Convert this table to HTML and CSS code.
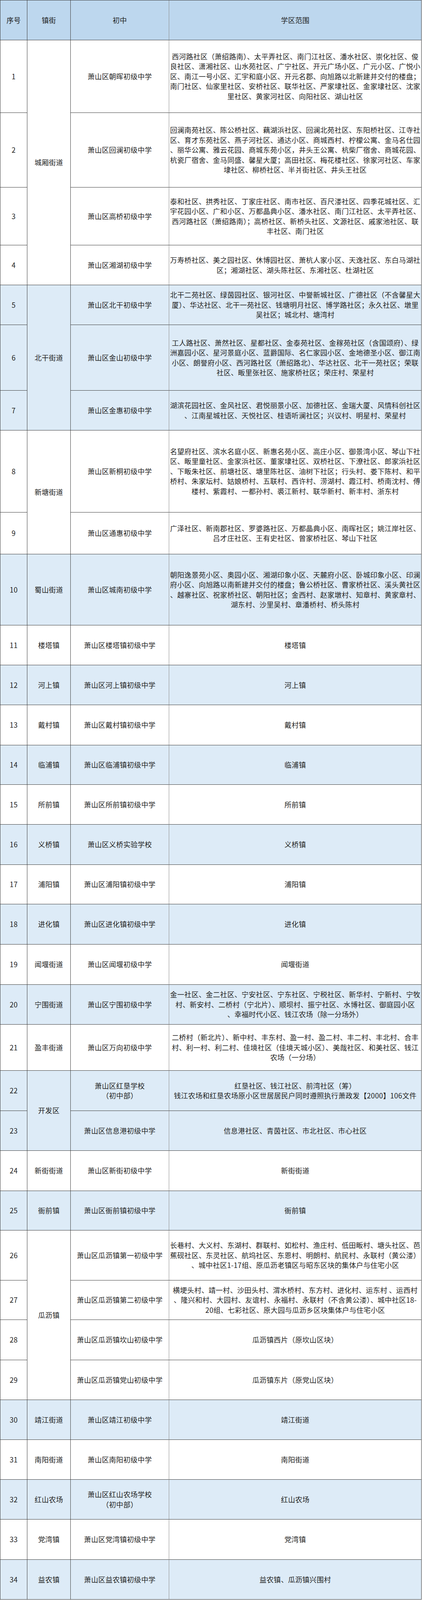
FILE: index.html
```html
<!DOCTYPE html>
<html lang="zh-CN">
<head>
<meta charset="utf-8">
<title>萧山区初中学区范围</title>
<link rel="stylesheet" href="styles.css">
</head>
<body>
<div class="grid">
  <div class="row head">
    <div class="cell">序号</div><div class="cell">镇街</div><div class="cell school">初中</div><div class="cell area">学区范围</div>
  </div>

  <div class="row">
    <div class="cell">1</div>
    <div class="cell span4">城厢街道</div>
    <div class="cell school">萧山区朝晖初级中学</div>
    <div class="cell area">西河路社区（萧绍路南）、太平弄社区、南门江社区、潘水社区、崇化社区、俊<br>良社区、潇湘社区、山水苑社区、广宁社区、开元广场小区、广元小区、广悦小<br>区、南江一号小区、汇宇和庭小区、开元名郡、向旭路以北新建并交付的楼盘；<br>南门社区、仙家里社区、安桥社区、联华社区、严家埭社区、金家埭社区、沈家<br>里社区、黄家河社区、向阳社区、湖山社区</div>
  </div>
  <div class="row">
    <div class="cell">2</div>
    <div class="cell school">萧山区回澜初级中学</div>
    <div class="cell area">回澜南苑社区、陈公桥社区、藕湖浜社区、回澜北苑社区、东阳桥社区、江寺社<br>区、育才东苑社区、燕子河社区、通达小区、商城西村、柠檬公寓、金马名仕园<br>、丽华公寓、雅云花园、商城东苑小区，井头王公寓、杭柴厂宿舍、商城花园、<br>杭瓷厂宿舍、金马同盛、馨星大厦；高田社区、梅花楼社区、徐家河社区、车家<br>埭社区、柳桥社区、半爿街社区、井头王社区</div>
  </div>
  <div class="row">
    <div class="cell">3</div>
    <div class="cell school">萧山区高桥初级中学</div>
    <div class="cell area">泰和社区、拱秀社区、丁家庄社区、南市社区、百尺溇社区、四季花城社区、汇<br>宇花园小区、广和小区、万都晶典小区、潘水社区、南门江社区、太平弄社区、<br>西河路社区（萧绍路南）；高桥社区、新桥头社区、文源社区、戚家池社区、联<br>丰社区、南门社区</div>
  </div>
  <div class="row">
    <div class="cell">4</div>
    <div class="cell school">萧山区湘湖初级中学</div>
    <div class="cell area">万寿桥社区、美之园社区、休博园社区、萧杭人家小区、天逸社区、东白马湖社<br>区；湘湖社区、湖头陈社区、东湘社区、杜湖社区</div>
  </div>

  <div class="row alt">
    <div class="cell">5</div>
    <div class="cell span3">北干街道</div>
    <div class="cell school">萧山区北干初级中学</div>
    <div class="cell area">北干二苑社区、绿茵园社区、银河社区、中誉新城社区、广德社区（不含馨星大<br>厦）、华达社区、北干一苑社区、钱塘明月社区、博学路社区；永久社区、墩里<br>吴社区；城北村、塘湾村</div>
  </div>
  <div class="row alt">
    <div class="cell">6</div>
    <div class="cell school">萧山区金山初级中学</div>
    <div class="cell area">工人路社区、萧然社区、星都社区、金泰苑社区、金稼苑社区（含国颂府）、绿<br>洲嘉园小区、星河景庭小区、蓝爵国际、名仁家园小区、金地德圣小区、御江南<br>小区、朗誉府小区、西河路社区（萧绍路北）、华达社区、北干一苑社区；荣联<br>社区、畈里张社区、施家桥社区；荣庄村、荣星村</div>
  </div>
  <div class="row alt">
    <div class="cell">7</div>
    <div class="cell school">萧山区金惠初级中学</div>
    <div class="cell area">湖滨花园社区、金风社区、君悦丽景小区、加德社区、金瑞大厦、风情科创社区<br>、江南星城社区、天悦社区、桂语听澜社区；兴议村、明星村、荣星村</div>
  </div>

  <div class="row">
    <div class="cell">8</div>
    <div class="cell span2">新塘街道</div>
    <div class="cell school">萧山区新桐初级中学</div>
    <div class="cell area">名望府社区、滨水名庭小区、新惠名苑小区、高庄小区、御景湾小区、琴山下社<br>区、畈里童社区、金家浜社区、董家埭社区、双桥社区、下潦社区、郎家浜社区<br>、下畈朱社区、前塘社区、塘里陈社区、油树下社区；行头村、娄下陈村、和平<br>桥村、朱家坛村、姑娘桥村、五联村、西许村、涝湖村、霞江村、桥南沈村、傅<br>楼村、紫霞村、一都孙村、裘江新村、联华新村、新丰村、浙东村</div>
  </div>
  <div class="row">
    <div class="cell">9</div>
    <div class="cell school">萧山区通惠初级中学</div>
    <div class="cell area">广泽社区、新南郡社区、罗婆路社区、万都晶典小区、南晖社区；姚江岸社区、<br>吕才庄社区、王有史社区、曾家桥社区、琴山下社区</div>
  </div>

  <div class="row alt">
    <div class="cell">10</div>
    <div class="cell">蜀山街道</div>
    <div class="cell school">萧山区城南初级中学</div>
    <div class="cell area">朝阳逸景苑小区、奥园小区、湘湖印象小区、天麓府小区、卧城印象小区、印澜<br>府小区、向旭路以南新建并交付的楼盘；鲁公桥社区、曹家桥社区、溪头黄社区<br>、越寨社区、祝家桥社区、朝阳社区；金西村、赵家墩村、知章村、黄家章村、<br>湖东村、沙里吴村、章潘桥村、桥头陈村</div>
  </div>

  <div class="row"><div class="cell">11</div><div class="cell">楼塔镇</div><div class="cell school">萧山区楼塔镇初级中学</div><div class="cell area">楼塔镇</div></div>
  <div class="row alt"><div class="cell">12</div><div class="cell">河上镇</div><div class="cell school">萧山区河上镇初级中学</div><div class="cell area">河上镇</div></div>
  <div class="row"><div class="cell">13</div><div class="cell">戴村镇</div><div class="cell school">萧山区戴村镇初级中学</div><div class="cell area">戴村镇</div></div>
  <div class="row alt"><div class="cell">14</div><div class="cell">临浦镇</div><div class="cell school">萧山区临浦镇初级中学</div><div class="cell area">临浦镇</div></div>
  <div class="row"><div class="cell">15</div><div class="cell">所前镇</div><div class="cell school">萧山区所前镇初级中学</div><div class="cell area">所前镇</div></div>
  <div class="row alt"><div class="cell">16</div><div class="cell">义桥镇</div><div class="cell school">萧山区义桥实验学校</div><div class="cell area">义桥镇</div></div>
  <div class="row"><div class="cell">17</div><div class="cell">浦阳镇</div><div class="cell school">萧山区浦阳镇初级中学</div><div class="cell area">浦阳镇</div></div>
  <div class="row alt"><div class="cell">18</div><div class="cell">进化镇</div><div class="cell school">萧山区进化镇初级中学</div><div class="cell area">进化镇</div></div>
  <div class="row"><div class="cell">19</div><div class="cell">闻堰街道</div><div class="cell school">萧山区闻堰初级中学</div><div class="cell area">闻堰街道</div></div>

  <div class="row alt">
    <div class="cell">20</div>
    <div class="cell">宁围街道</div>
    <div class="cell school">萧山区宁围初级中学</div>
    <div class="cell area">金一社区、金二社区、宁安社区、宁东社区、宁税社区、新华村、宁新村、宁牧<br>村、新安村、二桥村（宁北片）、顺坝村、振宁社区、水博社区、御庭园小区<br>、幸福时代小区、钱江农场（除一分场外）</div>
  </div>
  <div class="row">
    <div class="cell">21</div>
    <div class="cell">盈丰街道</div>
    <div class="cell school">萧山区万向初级中学</div>
    <div class="cell area">二桥村（新北片）、新中村、丰东村、盈一村、盈二村、丰二村、丰北村、合丰<br>村、利一村、利二村、佳境社区（佳境天城小区）、美哉社区、和美社区、钱江<br>农场（一分场）</div>
  </div>

  <div class="row alt">
    <div class="cell">22</div>
    <div class="cell span2">开发区</div>
    <div class="cell school">萧山区红垦学校<br>（初中部）</div>
    <div class="cell area">红垦社区、钱江社区、前湾社区（筹）<br>钱江农场和红垦农场原小区世居居民户同时遵照执行萧政发【2000】106文件</div>
  </div>
  <div class="row alt">
    <div class="cell">23</div>
    <div class="cell school">萧山区信息港初级中学</div>
    <div class="cell area">信息港社区、青茵社区、市北社区、市心社区</div>
  </div>

  <div class="row"><div class="cell">24</div><div class="cell">新街街道</div><div class="cell school">萧山区新街初级中学</div><div class="cell area">新街街道</div></div>
  <div class="row alt"><div class="cell">25</div><div class="cell">衙前镇</div><div class="cell school">萧山区衙前镇初级中学</div><div class="cell area">衙前镇</div></div>

  <div class="row">
    <div class="cell">26</div>
    <div class="cell span4">瓜沥镇</div>
    <div class="cell school">萧山区瓜沥镇第一初级中学</div>
    <div class="cell area">长巷村、大义村、东湖村、群联村、如松村、渔庄村、低田畈村、塘头社区、芭<br>蕉砚社区、东灵社区、航坞社区、东恩村、明朗村、航民村、永联村（黄公溇）<br>、城中社区1-17组、原瓜沥老镇区与昭东区块的集体户与住宅小区</div>
  </div>
  <div class="row">
    <div class="cell">27</div>
    <div class="cell school">萧山区瓜沥镇第二初级中学</div>
    <div class="cell area">横埂头村、靖一村、沙田头村、渭水桥村、东方村、进化村、运东村 、运西村<br>、隆兴和村、大园村、友谊村、永福村、永联村（不含黄公溇）、城中社区18-<br>20组、七彩社区、原大园与瓜沥乡区块集体户与住宅小区</div>
  </div>
  <div class="row">
    <div class="cell">28</div>
    <div class="cell school">萧山区瓜沥镇坎山初级中学</div>
    <div class="cell area">瓜沥镇西片（原坎山区块）</div>
  </div>
  <div class="row">
    <div class="cell">29</div>
    <div class="cell school">萧山区瓜沥镇党山初级中学</div>
    <div class="cell area">瓜沥镇东片（原党山区块）</div>
  </div>

  <div class="row alt"><div class="cell">30</div><div class="cell">靖江街道</div><div class="cell school">萧山区靖江初级中学</div><div class="cell area">靖江街道</div></div>
  <div class="row"><div class="cell">31</div><div class="cell">南阳街道</div><div class="cell school">萧山区南阳初级中学</div><div class="cell area">南阳街道</div></div>
  <div class="row alt"><div class="cell">32</div><div class="cell">红山农场</div><div class="cell school">萧山区红山农场学校<br>（初中部）</div><div class="cell area">红山农场</div></div>
  <div class="row"><div class="cell">33</div><div class="cell">党湾镇</div><div class="cell school">萧山区党湾镇初级中学</div><div class="cell area">党湾镇</div></div>
  <div class="row alt"><div class="cell">34</div><div class="cell">益农镇</div><div class="cell school">萧山区益农镇初级中学</div><div class="cell area">益农镇、瓜沥镇兴围村</div></div>
</div>
</body>
</html>
```

FILE: styles.css
```css
html, body {
  margin: 0;
  padding: 0;
  background: #ffffff;
}

.grid {
  display: grid;
  width: 1079px;
  box-sizing: border-box;
  border-top: 1px solid #3c3c3c;
  border-left: 1px solid #3c3c3c;
  grid-template-columns: 69px 111px 252px 646px;
  grid-template-rows:
    102px
    186px 191px 148px 102px
    102px 168px 102px
    210px 107px
    182px
    102px 102px 103px 101px 102px 103px 101px 103px 103px
    102px 118px
    103px 102px
    103px 101px
    128px 101px 103px 102px
    102px 102px 102px 103px 102px;
  font-family: "Noto Sans CJK SC", "Noto Sans", sans-serif;
  font-size: 18px;
  letter-spacing: 0.3px;
  line-height: 25.5px;
  color: #1e1e1e;
}

.row {
  display: contents;
}

.cell {
  box-sizing: border-box;
  display: flex;
  align-items: center;
  justify-content: center;
  text-align: center;
  padding: 0 3px;
  border-right: 1px solid #3c3c3c;
  border-bottom: 1px solid #3c3c3c;
  background: #ffffff;
  overflow: hidden;
}

.row.alt > .cell {
  background: #ddebf7;
}

.row.head > .cell {
  background: #bdd7ee;
}

.cell.school {
  border-right-color: #8c8c8c;
}

.cell.area {
  white-space: nowrap;
}

.span2 { grid-row: span 2; }
.span3 { grid-row: span 3; }
.span4 { grid-row: span 4; }
```
